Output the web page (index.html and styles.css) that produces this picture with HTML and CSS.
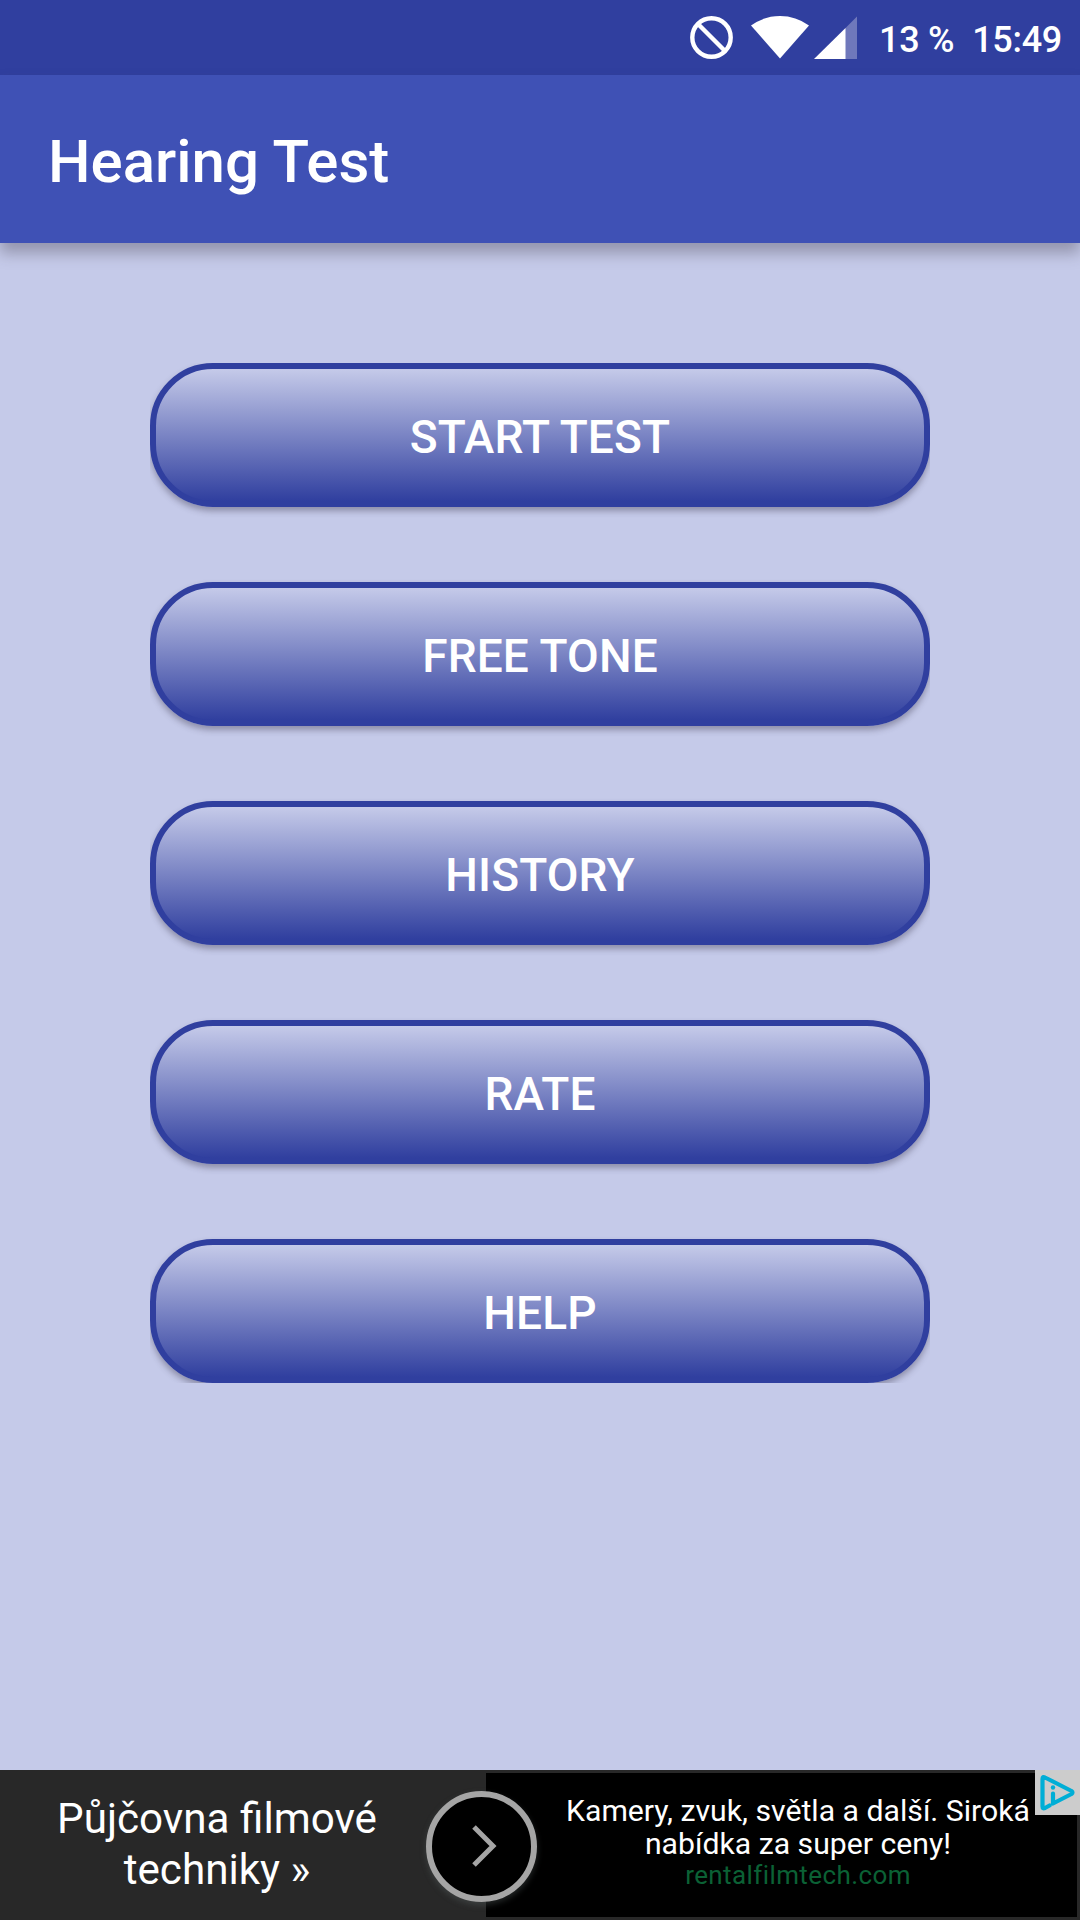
FILE: index.html
```html
<!DOCTYPE html>
<html lang="en">
<head>
  <meta charset="UTF-8">
  <title>Hearing Test</title>
  <link rel="stylesheet" href="styles.css">
</head>
<body>

  <div class="status-bar">
    <svg class="status-icons" width="170" height="46" viewBox="0 0 170 46">
      <g fill="none" stroke="#fff" stroke-width="4.4">
        <circle cx="21.5" cy="22.5" r="19.2"/>
        <path d="M8 9L35 36"/>
      </g>
      <path fill="#fff" d="M61 10.500Q74 1 90 1T119 10.500L90 43.500z"/>
      <path fill="#6f78bb" d="M167 1.500V44H155V13.500z"/>
      <path fill="#fff" d="M155.500 13V44H124z"/>
    </svg>
    <span class="battery">13 %</span>
    <span class="clock">15:49</span>
  </div>

  <header class="app-bar">
    <h1>Hearing Test</h1>
  </header>

  <main class="content">
    <div class="menu">
      <button type="button">START TEST</button>
      <button type="button">FREE TONE</button>
      <button type="button">HISTORY</button>
      <button type="button">RATE</button>
      <button type="button">HELP</button>
    </div>
  </main>

  <footer class="ad">
    <div class="ad-title">Půjčovna filmové<br>techniky »</div>
    <div class="ad-body">
      <p class="ad-text">Kamery, zvuk, světla a další. Siroká<br>nabídka za super ceny!</p>
      <p class="ad-link">rentalfilmtech.com</p>
    </div>
    <div class="ad-arrow">
      <svg width="111" height="111" viewBox="0 0 111 111">
        <circle cx="55.500" cy="55.500" r="52.500" fill="#000" stroke="#a5a5a5" stroke-width="6"/>
        <path d="M48 36L67 55L48 74" fill="none" stroke="#a5a5a5" stroke-width="5"/>
      </svg>
    </div>
    <div class="ad-choices">
      <svg width="45" height="45" viewBox="0 0 45 45">
        <path d="M14.500 35.500L10 38Q7.500 39 7.500 36.500V9Q7.500 6 10 7.500L36.500 21Q38.500 22.500 36.500 24L18 33.500V23.500" fill="none" stroke="#00aed6" stroke-width="4.200" stroke-linejoin="round" stroke-linecap="round"/>
        <circle cx="18" cy="17.500" r="2.200" fill="#00aed6"/>
      </svg>
    </div>
  </footer>

</body>
</html>
```
FILE: styles.css
```css
body {
  margin: 0;
  height: 1920px;
  display: flex;
  flex-direction: column;
  overflow: hidden;
  background: #c5cae9;
  color: #fff;
  font-family: Roboto, sans-serif;
}
.status-bar {
  height: 75px;
  padding-right: 18px;
  box-sizing: border-box;
  display: flex;
  justify-content: flex-end;
  background: #303f9f;
  font-size: 36px;
  font-weight: 500;
  line-height: 80px;
}
.status-icons {
  margin-top: 15px;
}
.battery {
  margin-left: 19px;
  letter-spacing: -0.3px;
}
.clock {
  margin-left: 18px;
  letter-spacing: -0.3px;
}
.app-bar {
  height: 168px;
  padding-left: 48px;
  display: flex;
  align-items: center;
  background: #3f51b5;
  box-shadow: 0 10px 14px rgba(60, 55, 70, 0.36);
}
.app-bar h1 {
  margin: 5px 0 0;
  font-size: 60px;
  font-weight: 500;
  line-height: 70px;
}
.content {
  flex: 1;
  padding: 120px 150px 0;
}
/* the list clips the button shadows at its edges */
.menu {
  display: flex;
  flex-direction: column;
  gap: 75px;
  overflow: hidden;
}
.menu button {
  height: 144px;
  padding: 4px 0 0;
  border: 6px solid #303f9f;
  border-radius: 63px;
  background: linear-gradient(#c5cae9, #303f9f);
  box-shadow: 0 4px 6px rgba(50, 45, 65, 0.38);
  color: #fff;
  font-family: inherit;
  font-size: 46px;
  font-weight: 500;
  letter-spacing: 0.15px;
}
.ad {
  position: relative;
  height: 150px;
  padding: 3px 3px 3px 0;
  box-sizing: border-box;
  display: flex;
  background: #282828;
  text-align: center;
}
.ad-title {
  width: 434px;
  margin-right: 52px;
  padding-top: 20px;
  font-size: 42.2px;
  line-height: 51px;
}
.ad-body {
  flex: 1;
  padding: 21px 0 0 33px;
  background: #000;
}
.ad-body p {
  margin: 0;
  white-space: nowrap;
}
.ad-text {
  font-size: 30.2px;
  line-height: 33px;
}
.ad-link {
  color: #0b6135;
  font-size: 26px;
  line-height: 31px;
  letter-spacing: 0.4px;
}
.ad-arrow {
  position: absolute;
  left: 426px;
  top: 21px;
  height: 111px;
  border-radius: 50%;
  box-shadow: 0 3px 6px rgba(90, 100, 100, 0.4);
}
.ad-choices {
  position: absolute;
  right: 0;
  top: 0;
  height: 45px;
  background: #ccc;
}
```
